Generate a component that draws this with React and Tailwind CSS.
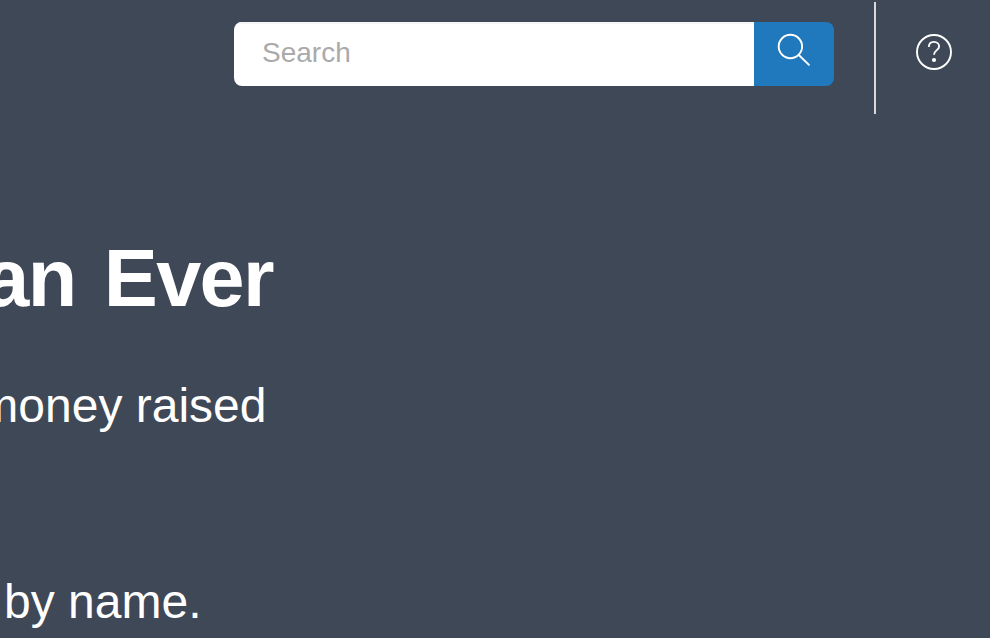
function SearchIcon() {
  return (
    <svg width="34" height="34" viewBox="0 0 34 34" fill="none" stroke="white" strokeWidth="1.9">
      <circle cx="13.4" cy="13.5" r="11.7" />
      <path d="M21.8 22 32.5 32.4" />
    </svg>
  );
}

function HelpIcon() {
  return (
    <svg width="36" height="36" viewBox="0 0 36 36" fill="none" stroke="white">
      <circle cx="18" cy="18" r="17" strokeWidth="1.9" />
      <path
        d="M12.9 13C12.9 9.7 15 7.9 17.9 7.9S23.1 9.8 23.1 12.4C23.1 16 18 16.4 18 20.8"
        strokeWidth="1.9"
      />
      <circle cx="18" cy="26" r="2.1" fill="white" stroke="none" />
    </svg>
  );
}

export default function App() {
  return (
    <div className="h-[638px] w-[990px] overflow-hidden bg-[#3f4856] font-['Liberation_Sans',Arial,sans-serif] text-white">
      <header className="flex h-[114px] items-start justify-end pr-[38px]">
        <form className="mt-[22px] flex h-16 w-[600px] overflow-hidden rounded-lg">
          <input
            type="text"
            placeholder="Search"
            aria-label="Search"
            className="h-16 w-[520px] border-t-2 border-[#f6f6f6] bg-white px-7 pb-[4px] text-[28px] text-black outline-none placeholder:text-[#aaaaaa]"
          />
          <button type="button" aria-label="Submit search" className="flex w-20 justify-center bg-[#2078bd] pt-[11px]">
            <SearchIcon />
          </button>
        </form>
        <div className="mt-0.5 ml-10 h-28 w-0.5 bg-[#dad8d8]" />
        <button type="button" aria-label="Help" className="mt-[34px] ml-10">
          <HelpIcon />
        </button>
      </header>
      <main className="pt-[124px] whitespace-nowrap">
        <h1 className="flex w-[273px] justify-end gap-[28px] text-[81px] leading-[80px] font-bold">
          <span className="tracking-[-1.5px]">an</span>
          <span className="tracking-[-1.6px]">Ever</span>
        </h1>
        <p className="mt-16 flex w-[266.5px] justify-end text-[48px] leading-[48px]">money raised</p>
        <p className="mt-[148px] flex w-[201.5px] justify-end text-[48px] leading-[48px]">by name.</p>
      </main>
    </div>
  );
}
